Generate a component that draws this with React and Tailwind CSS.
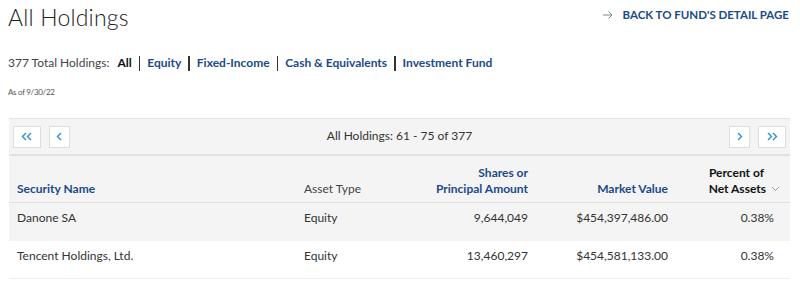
import React from "react";

const F = { fontFamily: "Lato, 'Noto Sans', sans-serif" };

function PagBtn({ children }) {
  return (
    <button className="w-[28px] h-[22px] bg-white border border-[#dedede] flex items-center justify-center text-[#2b8fd6]">
      {children}
    </button>
  );
}

const Chev = ({ dir = "left", double = false }) => (
  <svg width={double ? 12 : 7} height="9" viewBox={double ? "0 0 12 9" : "0 0 7 9"} fill="none" stroke="#2b8fd6" strokeWidth="1.4">
    {dir === "left" ? (
      double ? (
        <>
          <path d="M5 1 L1.5 4.5 L5 8" />
          <path d="M10 1 L6.5 4.5 L10 8" />
        </>
      ) : (
        <path d="M5 1 L1.5 4.5 L5 8" />
      )
    ) : double ? (
      <>
        <path d="M2 1 L5.5 4.5 L2 8" />
        <path d="M7 1 L10.5 4.5 L7 8" />
      </>
    ) : (
      <path d="M2 1 L5.5 4.5 L2 8" />
    )}
  </svg>
);

export default function App() {
  const rows = [
    { name: "Danone SA", type: "Equity", shares: "9,644,049", mv: "$454,397,486.00", pct: "0.38%" },
    { name: "Tencent Holdings, Ltd.", type: "Equity", shares: "13,460,297", mv: "$454,581,133.00", pct: "0.38%" },
  ];
  return (
    <div className="w-[800px] h-[281px] bg-white text-[#333] overflow-hidden" style={F}>
      <div className="flex items-start justify-between pl-[8px] pr-[11px] pt-[2px]">
        <h1 className="text-[23px] font-light leading-[30px] text-[#222] tracking-[0.2px]">All Holdings</h1>
        <a className="flex items-center gap-[9px] mt-[5px] text-[11.5px] font-bold text-[#1b4a8a] uppercase leading-[16px]">
          <svg width="10" height="8" viewBox="0 0 10 8" fill="none" stroke="#888" strokeWidth="1">
            <path d="M0 4 H9 M5.5 0.5 L9 4 L5.5 7.5" />
          </svg>
          Back to Fund's Detail Page
        </a>
      </div>
      <div className="flex items-center pl-[8px] mt-[23px] text-[12px] leading-[16px]">
        <span className="text-[#444]">377 Total Holdings:</span>
        <span className="ml-[8px] font-bold text-[#111]">All</span>
        <span className="mx-[7px] w-[1.5px] h-[15px] bg-[#333]" />
        <span className="font-bold text-[#1b4a8a]">Equity</span>
        <span className="mx-[7px] w-[1.5px] h-[15px] bg-[#333]" />
        <span className="font-bold text-[#1b4a8a]">Fixed-Income</span>
        <span className="mx-[7px] w-[1.5px] h-[15px] bg-[#333]" />
        <span className="font-bold text-[#1b4a8a]">Cash &amp; Equivalents</span>
        <span className="mx-[7px] w-[1.5px] h-[15px] bg-[#333]" />
        <span className="font-bold text-[#1b4a8a]">Investment Fund</span>
      </div>
      <div className="pl-[8px] mt-[15px] text-[8px] text-[#555] tracking-[-0.3px] leading-[12px]">As of 9/30/22</div>

      <div className="ml-[9px] mr-[10px] mt-[20px] border-t border-[#e4e4e4]">
        <div className="bg-[#f4f4f4] h-[37px] flex items-center justify-between px-[4px] border-b-[2px] border-[#e2e2e2]">
          <div className="flex gap-[8px]">
            <PagBtn><Chev dir="left" double /></PagBtn>
            <button className="w-[21px] h-[22px] bg-white border border-[#dedede] flex items-center justify-center"><Chev dir="left" /></button>
          </div>
          <div className="text-[12px] text-[#333] -mt-[2px]">All Holdings: 61 - 75 of 377</div>
          <div className="flex gap-[8px]">
            <button className="w-[21px] h-[22px] bg-white border border-[#dedede] flex items-center justify-center"><Chev dir="right" /></button>
            <PagBtn><Chev dir="right" double /></PagBtn>
          </div>
        </div>
        <div className="bg-[#f4f4f4] h-[47px] flex items-end pb-[5px] text-[12px] leading-[16px] border-b border-[#e0e0e0]">
          <div className="w-[295px] pl-[8px] font-bold text-[#1b4a8a]">Security Name</div>
          <div className="w-[100px] text-[#444]">Asset Type</div>
          <div className="w-[124px] text-right font-bold text-[#1b4a8a] whitespace-nowrap">Shares or<br />Principal Amount</div>
          <div className="w-[140px] text-right font-bold text-[#1b4a8a]">Market Value</div>
          <div className="flex-1 text-right pr-[10px] font-bold text-[#111]">
            <div className="pr-[16px]">Percent of</div>
            <div className="flex items-center justify-end gap-[5px]">
              Net Assets
              <svg width="9" height="6" viewBox="0 0 9 6" fill="none" stroke="#999" strokeWidth="1">
                <path d="M1 1 L4.5 4.5 L8 1" />
              </svg>
            </div>
          </div>
        </div>
        {rows.map((r, i) => (
          <div key={i} className={`h-[38px] flex items-start pt-[7px] text-[12px] leading-[16px] text-[#333] ${i === 0 ? "bg-[#f4f4f4]" : "bg-white border-b border-[#eeeeee]"}`}>
            <div className="w-[295px] pl-[8px]">{r.name}</div>
            <div className="w-[100px]">{r.type}</div>
            <div className="w-[124px] text-right">{r.shares}</div>
            <div className="w-[140px] text-right">{r.mv}</div>
            <div className="flex-1 text-right pr-[16px]">{r.pct}</div>
          </div>
        ))}
      </div>
    </div>
  );
}
